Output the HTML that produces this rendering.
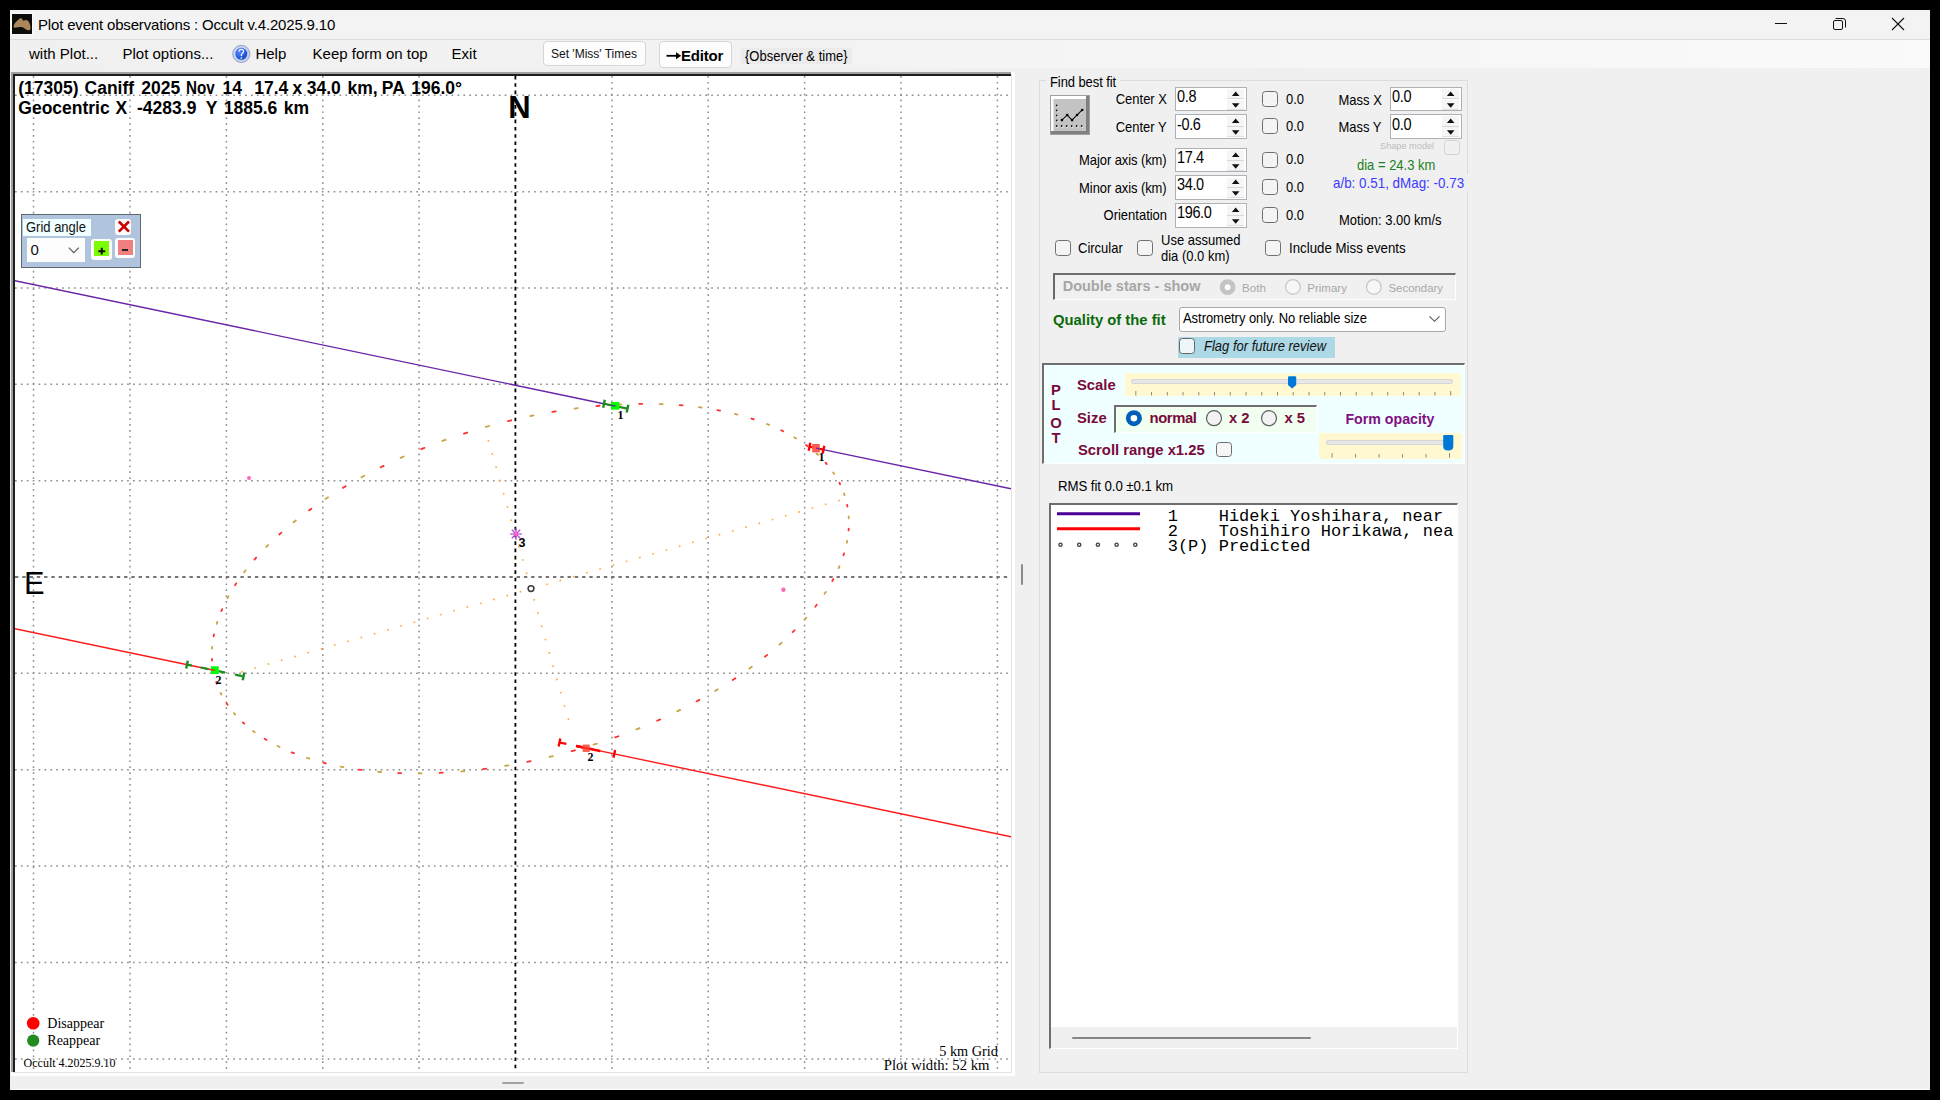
<!DOCTYPE html>
<html><head><meta charset="utf-8"><title>Plot event observations</title>
<style>
html,body{margin:0;padding:0;background:#000;font-family:'Liberation Sans',sans-serif;width:1940px;height:1100px;overflow:hidden;position:relative}
.t{position:absolute;white-space:pre;line-height:0}
svg{display:block}
</style></head><body>
<div style="position:absolute;left:10px;top:10px;width:1920px;height:1080px;background:#f0f0f0"></div>
<div style="position:absolute;left:10px;top:10px;width:1920px;height:29px;background:#f3f3f3"></div>
<div style="position:absolute;left:10px;top:39px;width:1920px;height:1px;background:#dcdcdc"></div>
<div style="position:absolute;left:10px;top:40px;width:1920px;height:28px;background:linear-gradient(90deg,#f0f0f0 0%,#f3f3f3 45%,#fafafa 100%)"></div>
<div style="position:absolute;left:10px;top:1089px;width:1920px;height:1px;background:#fbfbfb"></div>
<svg style="position:absolute;left:11px;top:13px" width="22" height="22" viewBox="-1 -1 22 22">
<rect x="-1" y="-1" width="22" height="22" fill="#fafafa"/>
<rect x="0" y="0" width="20" height="20" fill="#0d0c09"/>
<path d="M1.6 12.6 C1.8 10.6 2.6 9.2 4.4 7.4 C6 6 7.4 5 8.5 4.1 C9.4 4.1 10 4.8 10.6 5.9 C11.2 6.8 12 6.8 13 6.3 C14.4 5.7 16 6.6 17.2 8.4 C18.2 10.2 18.6 12.6 18.5 14.6 C18.3 16 17.6 16.5 16.2 16.3 C14.8 16.2 13.2 15.2 12 14 C10.9 13.2 9.6 13 8.4 13.1 C6.6 13.2 4.6 13.6 3 13.8 C2 13.8 1.5 13.4 1.6 12.6 Z" fill="#ad875c"/>
</svg>
<div class="t" style="left:38.00px;top:25.30px;font-size:15.00px;color:#000;font-family:'Liberation Sans', sans-serif;font-weight:normal;font-style:normal;letter-spacing:-0.17px">Plot event observations : Occult v.4.2025.9.10</div>
<svg style="position:absolute;left:1760px;top:10px" width="170" height="29" viewBox="1760 10 170 29">
<line x1="1775" y1="23.5" x2="1787" y2="23.5" stroke="#111" stroke-width="1"/>
<rect x="1833.5" y="20.5" width="9" height="9" rx="1.5" fill="none" stroke="#111" stroke-width="1"/>
<path d="M1835.5 18.5 H1843 Q1845.5 18.5 1845.5 21 V27.5" fill="none" stroke="#111" stroke-width="1"/>
<line x1="1892" y1="18" x2="1904" y2="30" stroke="#111" stroke-width="1.1"/>
<line x1="1904" y1="18" x2="1892" y2="30" stroke="#111" stroke-width="1.1"/>
</svg>
<div class="t" style="left:29.00px;top:53.80px;font-size:15.00px;color:#000;font-family:'Liberation Sans', sans-serif;font-weight:normal;font-style:normal;">with Plot...</div>
<div class="t" style="left:122.50px;top:53.80px;font-size:15.00px;color:#000;font-family:'Liberation Sans', sans-serif;font-weight:normal;font-style:normal;">Plot options...</div>
<svg style="position:absolute;left:231px;top:44px" width="20" height="20" viewBox="231 44 20 20">
<defs><radialGradient id="hg" cx="0.35" cy="0.35" r="0.75"><stop offset="0" stop-color="#4f86ff"/><stop offset="0.55" stop-color="#2a5fe0"/><stop offset="1" stop-color="#1240b0"/></radialGradient></defs>
<circle cx="241.3" cy="53.9" r="8.6" fill="#c6d2ec" stroke="#8a9cc8" stroke-width="0.9"/>
<circle cx="241.3" cy="53.9" r="6.3" fill="url(#hg)" stroke="#dfe8fb" stroke-width="0.6"/>
<path d="M238.9 51.6 Q239.1 49.3 241.4 49.3 Q243.6 49.3 243.6 51.3 Q243.6 52.7 242.2 53.6 Q241.3 54.3 241.3 55.9" fill="none" stroke="#f2f6ff" stroke-width="1.3"/>
<circle cx="241.3" cy="58" r="0.85" fill="#f2f6ff"/>
</svg>
<div class="t" style="left:255.40px;top:53.80px;font-size:15.00px;color:#000;font-family:'Liberation Sans', sans-serif;font-weight:normal;font-style:normal;">Help</div>
<div class="t" style="left:312.60px;top:53.80px;font-size:15.00px;color:#000;font-family:'Liberation Sans', sans-serif;font-weight:normal;font-style:normal;">Keep form on top</div>
<div class="t" style="left:451.60px;top:53.80px;font-size:15.00px;color:#000;font-family:'Liberation Sans', sans-serif;font-weight:normal;font-style:normal;">Exit</div>
<div style="position:absolute;left:543px;top:41px;width:103px;height:25px;background:#fdfdfd;border:1px solid #d5d5d5;border-radius:4px;box-sizing:border-box"></div>
<div class="t" style="left:551.00px;top:53.64px;font-size:12.00px;color:#111;font-family:'Liberation Sans', sans-serif;font-weight:normal;font-style:normal;">Set 'Miss' Times</div>
<div style="position:absolute;left:659px;top:41px;width:73px;height:27px;background:#fdfdfd;border:1px solid #d5d5d5;border-radius:4px;box-sizing:border-box"></div>
<svg style="position:absolute;left:664px;top:50px" width="20" height="12" viewBox="664 50 20 12"><path d="M666.5 55.8 H679" stroke="#000" stroke-width="1.8"/><path d="M676 52.3 L681.2 55.8 L676 59.3 Z" fill="#000"/></svg>
<div class="t" style="left:681.00px;top:55.80px;font-size:15.00px;color:#000;font-family:'Liberation Sans', sans-serif;font-weight:bold;font-style:normal;letter-spacing:-0.2px">Editor</div>
<div style="position:absolute;left:741px;top:48px;width:111px;height:16px;background:#ebebeb"></div>
<div class="t" style="left:745.00px;top:56.12px;font-size:14.95px;color:#000;font-family:'Liberation Sans', sans-serif;font-weight:normal;font-style:normal;transform:scaleX(0.8696);transform-origin:0 0;">{Observer &amp; time}</div>
<div style="position:absolute;left:11px;top:72px;width:1004px;height:1004px;background:#ffffff"></div>
<div style="position:absolute;left:11px;top:72px;width:1000px;height:2px;background:#a0a0a0"></div>
<div style="position:absolute;left:11px;top:72px;width:2px;height:1000px;background:#a0a0a0"></div>
<div style="position:absolute;left:13px;top:74px;width:998px;height:2px;background:#1e1e1e"></div>
<div style="position:absolute;left:13px;top:74px;width:2px;height:998px;background:#1e1e1e"></div>
<div style="position:absolute;left:1011px;top:74px;width:1px;height:999px;background:#e3e3e3"></div>
<div style="position:absolute;left:13px;top:1072px;width:999px;height:1px;background:#e3e3e3"></div>
<svg style="position:absolute;left:15px;top:76px" width="996" height="996" viewBox="15 76 996 996">
<line x1="33.5" y1="76" x2="33.5" y2="1072" stroke="#8e8e8e" stroke-width="1.5" stroke-dasharray="1.7 4.2"/>
<line x1="130" y1="76" x2="130" y2="1072" stroke="#8e8e8e" stroke-width="1.5" stroke-dasharray="1.7 4.2"/>
<line x1="226.4" y1="76" x2="226.4" y2="1072" stroke="#8e8e8e" stroke-width="1.5" stroke-dasharray="1.7 4.2"/>
<line x1="322.8" y1="76" x2="322.8" y2="1072" stroke="#8e8e8e" stroke-width="1.5" stroke-dasharray="1.7 4.2"/>
<line x1="419.1" y1="76" x2="419.1" y2="1072" stroke="#8e8e8e" stroke-width="1.5" stroke-dasharray="1.7 4.2"/>
<line x1="611.9" y1="76" x2="611.9" y2="1072" stroke="#8e8e8e" stroke-width="1.5" stroke-dasharray="1.7 4.2"/>
<line x1="708.2" y1="76" x2="708.2" y2="1072" stroke="#8e8e8e" stroke-width="1.5" stroke-dasharray="1.7 4.2"/>
<line x1="804.6" y1="76" x2="804.6" y2="1072" stroke="#8e8e8e" stroke-width="1.5" stroke-dasharray="1.7 4.2"/>
<line x1="901" y1="76" x2="901" y2="1072" stroke="#8e8e8e" stroke-width="1.5" stroke-dasharray="1.7 4.2"/>
<line x1="997.4" y1="76" x2="997.4" y2="1072" stroke="#8e8e8e" stroke-width="1.5" stroke-dasharray="1.7 4.2"/>
<line x1="15" y1="95.3" x2="1011" y2="95.3" stroke="#8e8e8e" stroke-width="1.5" stroke-dasharray="1.7 4.2"/>
<line x1="15" y1="191.8" x2="1011" y2="191.8" stroke="#8e8e8e" stroke-width="1.5" stroke-dasharray="1.7 4.2"/>
<line x1="15" y1="288.0" x2="1011" y2="288.0" stroke="#8e8e8e" stroke-width="1.5" stroke-dasharray="1.7 4.2"/>
<line x1="15" y1="384.3" x2="1011" y2="384.3" stroke="#8e8e8e" stroke-width="1.5" stroke-dasharray="1.7 4.2"/>
<line x1="15" y1="480.7" x2="1011" y2="480.7" stroke="#8e8e8e" stroke-width="1.5" stroke-dasharray="1.7 4.2"/>
<line x1="15" y1="673.3" x2="1011" y2="673.3" stroke="#8e8e8e" stroke-width="1.5" stroke-dasharray="1.7 4.2"/>
<line x1="15" y1="769.7" x2="1011" y2="769.7" stroke="#8e8e8e" stroke-width="1.5" stroke-dasharray="1.7 4.2"/>
<line x1="15" y1="866.0" x2="1011" y2="866.0" stroke="#8e8e8e" stroke-width="1.5" stroke-dasharray="1.7 4.2"/>
<line x1="15" y1="962.4" x2="1011" y2="962.4" stroke="#8e8e8e" stroke-width="1.5" stroke-dasharray="1.7 4.2"/>
<line x1="15" y1="1059.0" x2="1011" y2="1059.0" stroke="#8e8e8e" stroke-width="1.5" stroke-dasharray="1.7 4.2"/>
<line x1="515.4" y1="76" x2="515.4" y2="1072" stroke="#000" stroke-width="1.8" stroke-dasharray="3.6 3.67"/>
<line x1="15" y1="577" x2="1011" y2="577" stroke="#4a4a4a" stroke-width="1.7" stroke-dasharray="3.4 3.87"/>
<line x1="14" y1="280.5" x2="617" y2="406.49" stroke="#6a24a8" stroke-width="1.4"/>
<line x1="816" y1="448.08" x2="1011" y2="488.8" stroke="#6a24a8" stroke-width="1.4"/>
<line x1="14" y1="628.5" x2="215" y2="670.47" stroke="#ff1a1a" stroke-width="1.4"/>
<line x1="576" y1="745.92" x2="1011" y2="836.8" stroke="#ff1a1a" stroke-width="1.4"/>
<path d="M847.10 504.79L847.44 506.52M848.69 528.53L848.56 530.36M844.08 553.43L843.49 555.33M833.36 579.02L832.32 580.96M816.75 604.80L815.28 606.73M794.57 630.26L792.69 632.15M767.24 654.91L765.00 656.72M735.31 678.28L732.74 679.96M699.38 699.89L696.54 701.43M660.17 719.34L657.11 720.70M618.43 736.24L615.22 737.40M574.97 750.27L571.67 751.20M530.65 761.16L527.32 761.84M486.33 768.68L483.03 769.11M442.86 772.70L439.66 772.86M401.10 773.14L398.06 773.03M361.85 769.98L359.03 769.60M325.88 763.30L323.34 762.66M293.90 753.21L291.68 752.32M266.51 739.92L264.66 738.80M244.27 723.69L242.82 722.36M227.59 704.82L226.58 703.31M216.81 683.70L216.24 682.03M212.13 660.72L212.03 658.93M213.64 636.34L214.01 634.47M221.32 611.03L222.15 609.10M235.02 585.28L236.28 583.34M254.47 559.60L256.15 557.69M279.28 534.48L281.35 532.63M308.99 510.41L311.40 508.67M343.00 487.87L345.71 486.25M380.66 467.29L383.61 465.84M421.24 449.07L424.38 447.81M463.94 433.56L467.20 432.52M507.93 421.08L511.26 420.27M552.36 411.85L555.69 411.29M596.37 406.06L599.63 405.77M639.09 403.83L642.22 403.81M679.69 405.19L682.63 405.44M717.39 410.12L720.08 410.63M751.45 418.53L753.84 419.30M781.20 430.25L783.25 431.25M806.08 445.04L807.73 446.27M825.59 462.64L826.82 464.06M839.35 482.68L840.15 484.27" stroke="#ff3030" stroke-width="1.8" stroke-linecap="round" fill="none"/>
<path d="M848.67 516.48L848.77 518.27M847.16 540.86L846.79 542.73M839.48 566.17L838.65 568.10M825.78 591.92L824.52 593.86M806.33 617.60L804.65 619.51M781.52 642.72L779.45 644.57M751.81 666.79L749.40 668.53M717.80 689.33L715.09 690.95M680.14 709.91L677.19 711.36M639.56 728.13L636.42 729.39M596.86 743.64L593.60 744.68M552.87 756.12L549.54 756.93M508.44 765.35L505.11 765.91M464.43 771.14L461.17 771.43M421.71 773.37L418.58 773.39M381.11 772.01L378.17 771.76M343.41 767.08L340.72 766.57M309.35 758.67L306.96 757.90M279.60 746.95L277.55 745.95M254.72 732.16L253.07 730.93M235.21 714.56L233.98 713.14M221.45 694.52L220.65 692.93M213.70 672.41L213.36 670.68M212.11 648.67L212.24 646.84M216.72 623.77L217.31 621.87M227.44 598.18L228.48 596.24M244.05 572.40L245.52 570.47M266.23 546.94L268.11 545.05M293.56 522.29L295.80 520.48M325.49 498.92L328.06 497.24M361.42 477.31L364.26 475.77M400.63 457.86L403.69 456.50M442.37 440.96L445.58 439.80M485.83 426.93L489.13 426.00M530.15 416.04L533.48 415.36M574.47 408.52L577.77 408.09M617.94 404.50L621.14 404.34M659.70 404.06L662.74 404.17M698.95 407.22L701.77 407.60M734.92 413.90L737.46 414.54M766.90 423.99L769.12 424.88M794.29 437.28L796.14 438.40M816.53 453.51L817.98 454.84M833.21 472.38L834.22 473.89M843.99 493.50L844.56 495.17" stroke="#c9a447" stroke-width="1.8" stroke-linecap="round" fill="none"/>
<path d="M241.16 671.90L242.70 671.46M254.42 668.10L255.96 667.66M267.69 664.29L269.23 663.85M280.95 660.49L282.49 660.05M294.22 656.69L295.76 656.24M307.48 652.88L309.02 652.44M320.75 649.08L322.29 648.64M334.02 645.27L335.55 644.83M347.28 641.47L348.82 641.03M360.55 637.67L362.08 637.23M373.81 633.86L375.35 633.42M387.08 630.06L388.61 629.62M400.34 626.25L401.88 625.81M413.61 622.45L415.15 622.01M426.87 618.65L428.41 618.21M440.14 614.84L441.68 614.40M453.40 611.04L454.94 610.60M466.67 607.24L468.21 606.79M479.93 603.43L481.47 602.99M493.20 599.63L494.74 599.19M506.47 595.82L508.00 595.38M519.73 592.02L521.27 591.58M533.00 588.22L534.53 587.78M546.26 584.41L547.80 583.97M559.53 580.61L561.07 580.17M572.79 576.81L574.33 576.36M586.06 573.00L587.60 572.56M599.32 569.20L600.86 568.76M612.59 565.39L614.13 564.95M625.85 561.59L627.39 561.15M639.12 557.79L640.66 557.35M652.39 553.98L653.92 553.54M665.65 550.18L667.19 549.74M678.92 546.37L680.45 545.93M692.18 542.57L693.72 542.13M705.45 538.77L706.98 538.33M718.71 534.96L720.25 534.52M731.98 531.16L733.52 530.72M745.24 527.36L746.78 526.91M758.51 523.55L760.05 523.11M771.77 519.75L773.31 519.31M785.04 515.94L786.58 515.50M798.30 512.14L799.84 511.70M811.57 508.34L813.11 507.90M824.84 504.53L826.37 504.09M838.10 500.73L839.64 500.29M488.24 439.88L488.68 441.41M492.05 453.14L492.49 454.68M495.85 466.41L496.29 467.95M499.65 479.67L500.09 481.21M503.46 492.94L503.90 494.48M507.26 506.20L507.70 507.74M511.06 519.47L511.51 521.01M514.87 532.73L515.31 534.27M518.67 546.00L519.11 547.54M522.48 559.27L522.92 560.80M526.28 572.53L526.72 574.07M530.08 585.80L530.52 587.33M533.89 599.06L534.33 600.60M537.69 612.33L538.13 613.87M541.49 625.59L541.94 627.13M545.30 638.86L545.74 640.40M549.10 652.12L549.54 653.66M552.91 665.39L553.35 666.93M556.71 678.65L557.15 680.19M560.51 691.92L560.95 693.46M564.32 705.19L564.76 706.72M568.12 718.45L568.56 719.99" stroke="#ffa833" stroke-width="1.6" fill="none"/>
<circle cx="249" cy="478" r="2" fill="#ff69b4"/>
<circle cx="783.4" cy="589.7" r="2.2" fill="#ff69b4"/>
<g stroke="#b04fd0" stroke-width="1.3"><line x1="510" y1="534" x2="522" y2="534"/><line x1="516" y1="528" x2="516" y2="540"/><line x1="511.8" y1="529.8" x2="520.2" y2="538.2"/><line x1="520.2" y1="529.8" x2="511.8" y2="538.2"/></g>
<circle cx="516" cy="534" r="2" fill="#ff5fc8"/>
<circle cx="531" cy="588.6" r="2.9" fill="#fff" stroke="#3c3c3c" stroke-width="1.5"/>
<line x1="604" y1="403.77" x2="627.5" y2="408.68" stroke="#1f8a1f" stroke-width="2.2"/><line x1="604.82" y1="399.85" x2="603.18" y2="407.68" stroke="#1f8a1f" stroke-width="2.4"/><line x1="628.32" y1="404.76" x2="626.68" y2="412.60" stroke="#1f8a1f" stroke-width="2.4"/>
<rect x="611" y="402" width="8.3" height="7.7" fill="#00ff00"/>
<line x1="809.5" y1="446.72" x2="823.5" y2="449.64" stroke="#ff0000" stroke-width="2.2"/><line x1="810.32" y1="442.80" x2="808.68" y2="450.63" stroke="#ff0000" stroke-width="2.4"/><line x1="824.32" y1="445.73" x2="822.68" y2="453.56" stroke="#ff0000" stroke-width="2.4"/>
<rect x="812.2" y="444" width="7.6" height="8.4" fill="#ff5a4a"/>
<line x1="187" y1="664.62" x2="243.5" y2="676.42" stroke="#1f8a1f" stroke-width="2.2" stroke-dasharray="5 9 8 10 7 10 7.5"/><line x1="187.82" y1="660.70" x2="186.18" y2="668.53" stroke="#1f8a1f" stroke-width="2.4"/><line x1="244.32" y1="672.51" x2="242.68" y2="680.34" stroke="#1f8a1f" stroke-width="2.4"/>
<rect x="211" y="666.3" width="7.7" height="7.7" fill="#00ff00"/>
<line x1="559.5" y1="742.47" x2="614.3" y2="753.92" stroke="#ff0000" stroke-width="2.2" stroke-dasharray="7 10 14 1000"/><line x1="560.32" y1="738.55" x2="558.68" y2="746.38" stroke="#ff0000" stroke-width="2.4"/><line x1="615.12" y1="750.01" x2="613.48" y2="757.84" stroke="#ff0000" stroke-width="2.4"/>
<line x1="576" y1="745.9" x2="600.3" y2="750.9" stroke="#ff0000" stroke-width="2.6"/>
<rect x="582.7" y="744.6" width="7" height="7.3" fill="#ff5a4a"/>
<line x1="611" y1="405.23" x2="615.5" y2="406.17" stroke="#5a2090" stroke-width="1.3"/>
<line x1="816" y1="448.08" x2="820" y2="448.91" stroke="#6a24a8" stroke-width="1.3"/>
<line x1="211" y1="669.63" x2="215" y2="670.47" stroke="#ff1a1a" stroke-width="1.3"/>
<line x1="582.7" y1="747.32" x2="590" y2="748.84" stroke="#ff1a1a" stroke-width="1.3"/>
</svg>
<div class="t" style="left:18.30px;top:87.94px;font-size:17.50px;color:#000;font-family:'Liberation Sans', sans-serif;font-weight:bold;font-style:normal;">(17305)</div>
<div class="t" style="left:84.55px;top:87.94px;font-size:17.50px;color:#000;font-family:'Liberation Sans', sans-serif;font-weight:bold;font-style:normal;">Caniff</div>
<div class="t" style="left:141.30px;top:87.94px;font-size:17.50px;color:#000;font-family:'Liberation Sans', sans-serif;font-weight:bold;font-style:normal;">2025</div>
<div class="t" style="left:185.55px;top:87.94px;font-size:17.50px;color:#000;font-family:'Liberation Sans', sans-serif;font-weight:bold;font-style:normal;transform:scaleX(0.87);transform-origin:0 0">Nov</div>
<div class="t" style="left:222.55px;top:87.94px;font-size:17.50px;color:#000;font-family:'Liberation Sans', sans-serif;font-weight:bold;font-style:normal;">14</div>
<div class="t" style="left:254.30px;top:87.94px;font-size:17.50px;color:#000;font-family:'Liberation Sans', sans-serif;font-weight:bold;font-style:normal;">17.4</div>
<div class="t" style="left:292.55px;top:87.94px;font-size:17.50px;color:#000;font-family:'Liberation Sans', sans-serif;font-weight:bold;font-style:normal;">x</div>
<div class="t" style="left:306.80px;top:87.94px;font-size:17.50px;color:#000;font-family:'Liberation Sans', sans-serif;font-weight:bold;font-style:normal;">34.0</div>
<div class="t" style="left:347.55px;top:87.94px;font-size:17.50px;color:#000;font-family:'Liberation Sans', sans-serif;font-weight:bold;font-style:normal;">km,</div>
<div class="t" style="left:381.80px;top:87.94px;font-size:17.50px;color:#000;font-family:'Liberation Sans', sans-serif;font-weight:bold;font-style:normal;">PA</div>
<div class="t" style="left:411.30px;top:87.94px;font-size:17.50px;color:#000;font-family:'Liberation Sans', sans-serif;font-weight:bold;font-style:normal;">196.0&deg;</div>
<div class="t" style="left:18.30px;top:107.54px;font-size:17.50px;color:#000;font-family:'Liberation Sans', sans-serif;font-weight:bold;font-style:normal;">Geocentric</div>
<div class="t" style="left:115.55px;top:107.54px;font-size:17.50px;color:#000;font-family:'Liberation Sans', sans-serif;font-weight:bold;font-style:normal;">X</div>
<div class="t" style="left:137.05px;top:107.54px;font-size:17.50px;color:#000;font-family:'Liberation Sans', sans-serif;font-weight:bold;font-style:normal;">-4283.9</div>
<div class="t" style="left:205.80px;top:107.54px;font-size:17.50px;color:#000;font-family:'Liberation Sans', sans-serif;font-weight:bold;font-style:normal;">Y</div>
<div class="t" style="left:223.80px;top:107.54px;font-size:17.50px;color:#000;font-family:'Liberation Sans', sans-serif;font-weight:bold;font-style:normal;">1885.6</div>
<div class="t" style="left:283.80px;top:107.54px;font-size:17.50px;color:#000;font-family:'Liberation Sans', sans-serif;font-weight:bold;font-style:normal;">km</div>
<div class="t" style="left:508.30px;top:108.26px;font-size:31.00px;color:#000;font-family:'Liberation Sans', sans-serif;font-weight:bold;font-style:normal;">N</div>
<div class="t" style="left:24.10px;top:583.93px;font-size:30.80px;color:#000;font-family:'Liberation Sans', sans-serif;font-weight:normal;font-style:normal;">E</div>
<div class="t" style="left:617.50px;top:414.55px;font-size:12.00px;color:#000;font-family:'Liberation Serif', serif;font-weight:bold;font-style:normal;">1</div>
<div class="t" style="left:818.50px;top:457.25px;font-size:12.00px;color:#000;font-family:'Liberation Serif', serif;font-weight:bold;font-style:normal;">1</div>
<div class="t" style="left:215.50px;top:679.75px;font-size:12.00px;color:#000;font-family:'Liberation Serif', serif;font-weight:bold;font-style:normal;">2</div>
<div class="t" style="left:587.60px;top:757.25px;font-size:12.00px;color:#000;font-family:'Liberation Serif', serif;font-weight:bold;font-style:normal;">2</div>
<div class="t" style="left:518.50px;top:542.67px;font-size:12.50px;color:#000;font-family:'Liberation Sans', sans-serif;font-weight:bold;font-style:normal;">3</div>
<svg style="position:absolute;left:20px;top:1010px" width="30" height="40" viewBox="20 1010 30 40"><circle cx="33.2" cy="1023.2" r="6.3" fill="#ff0000"/><circle cx="33.2" cy="1040.6" r="6.1" fill="#228b22"/></svg>
<div class="t" style="left:47.30px;top:1023.57px;font-size:14.00px;color:#000;font-family:'Liberation Serif', serif;font-weight:normal;font-style:normal;">Disappear</div>
<div class="t" style="left:47.30px;top:1040.88px;font-size:14.00px;color:#000;font-family:'Liberation Serif', serif;font-weight:normal;font-style:normal;">Reappear</div>
<div class="t" style="left:23.60px;top:1063.45px;font-size:12.00px;color:#000;font-family:'Liberation Serif', serif;font-weight:normal;font-style:normal;">Occult 4.2025.9.10</div>
<div class="t" style="right:942.00px;top:1051.17px;font-size:14.30px;color:#000;font-family:'Liberation Serif', serif;font-weight:normal;font-style:normal;">5 km Grid</div>
<div class="t" style="right:950.50px;top:1065.04px;font-size:14.70px;color:#000;font-family:'Liberation Serif', serif;font-weight:normal;font-style:normal;">Plot width: 52 km</div>
<div style="position:absolute;left:21px;top:214px;width:120px;height:54px;background:#b0c4de;border:1.5px solid #606870;box-sizing:border-box"></div>
<div style="position:absolute;left:23px;top:219px;width:68px;height:16.5px;background:#f0ffff"></div>
<div class="t" style="left:25.90px;top:227.32px;font-size:14.95px;color:#111;font-family:'Liberation Sans', sans-serif;font-weight:normal;font-style:normal;transform:scaleX(0.8696);transform-origin:0 0;">Grid angle</div>
<div style="position:absolute;left:115px;top:219px;width:16px;height:15.5px;background:#fbfbfb;border-radius:3px"></div>
<svg style="position:absolute;left:115px;top:219px" width="16" height="16" viewBox="115 219 16 16"><path d="M118.8 221.5 L129 231.7 M129 221.5 L118.8 231.7" stroke="#cc0000" stroke-width="2.6"/></svg>
<div style="position:absolute;left:27px;top:237.5px;width:57.5px;height:24.5px;background:#fdfdfd"></div>
<div class="t" style="left:30.50px;top:250.10px;font-size:15.00px;color:#111;font-family:'Liberation Sans', sans-serif;font-weight:normal;font-style:normal;">0</div>
<svg style="position:absolute;left:66px;top:244px" width="16" height="12" viewBox="66 244 16 12"><path d="M68.8 247.6 L73.8 252.6 L78.8 247.6" stroke="#555" stroke-width="1.1" fill="none"/></svg>
<div style="position:absolute;left:91px;top:239px;width:20.5px;height:20.5px;background:#fcfcfc;border-radius:3px"></div>
<div style="position:absolute;left:94px;top:241.4px;width:15px;height:15.099999999999994px;background:#7cfc00"></div>
<svg style="position:absolute;left:94px;top:241px" width="15" height="16" viewBox="94 241 15 16"><path d="M98.3 251.2 H105.2 M101.75 247.8 V254.6" stroke="#111" stroke-width="2"/></svg>
<div style="position:absolute;left:115px;top:238px;width:19.5px;height:19.5px;background:#fcfcfc;border-radius:3px"></div>
<div style="position:absolute;left:117.5px;top:240px;width:15.099999999999994px;height:15px;background:#f08080"></div>
<div style="position:absolute;left:122.3px;top:249px;width:5.400000000000006px;height:1.8000000000000114px;background:#222"></div>
<div style="position:absolute;left:502px;top:1082px;width:22px;height:2px;background:#a3a3a3;border-radius:1px"></div>
<div style="position:absolute;left:1021px;top:564px;width:2px;height:21px;background:#8a8a8a;border-radius:1px"></div>
<div style="position:absolute;left:1039px;top:80px;width:429px;height:993px;border:1px solid #dcdcdc;box-sizing:border-box"></div>
<div style="position:absolute;left:1046px;top:74px;width:74px;height:14px;background:#f0f0f0"></div>
<div class="t" style="left:1050.00px;top:81.52px;font-size:14.95px;color:#000;font-family:'Liberation Sans', sans-serif;font-weight:normal;font-style:normal;transform:scaleX(0.8696);transform-origin:0 0;letter-spacing:-0.1px">Find best fit</div>
<svg style="position:absolute;left:1050px;top:95px" width="40" height="40" viewBox="1050 95 40 40">
<rect x="1050" y="95" width="40" height="40" fill="#a0a0a0"/>
<rect x="1051" y="96" width="38" height="38" fill="#808080"/>
<rect x="1051" y="96" width="35" height="35" fill="#ffffff"/>
<rect x="1053.5" y="99" width="32.5" height="32" fill="#c3c3c3"/>
<g fill="#fff">
<circle cx="1057.4" cy="106.2" r="0.9"/><circle cx="1057.4" cy="111.2" r="0.9"/><circle cx="1057.4" cy="116.2" r="0.9"/><circle cx="1057.4" cy="121.2" r="0.9"/>
<circle cx="1057.4" cy="126.7" r="0.9"/><circle cx="1062.4" cy="126.7" r="0.9"/><circle cx="1067.4" cy="126.7" r="0.9"/><circle cx="1072.4" cy="126.7" r="0.9"/><circle cx="1077.4" cy="126.7" r="0.9"/><circle cx="1082.4" cy="126.7" r="0.9"/>
</g>
<g fill="#111">
<circle cx="1056.7" cy="105.5" r="0.9"/><circle cx="1056.7" cy="110.5" r="0.9"/><circle cx="1056.7" cy="115.5" r="0.9"/><circle cx="1056.7" cy="120.5" r="0.9"/>
<circle cx="1056.7" cy="126" r="0.9"/><circle cx="1061.7" cy="126" r="0.9"/><circle cx="1066.7" cy="126" r="0.9"/><circle cx="1071.7" cy="126" r="0.9"/><circle cx="1076.7" cy="126" r="0.9"/><circle cx="1081.7" cy="126" r="0.9"/>
</g>
<polyline points="1062.6,120.8 1067.8,115.7 1072.7,120.8 1077.7,115.7 1082.8,110.7" fill="none" stroke="#fff" stroke-width="1"/>
<polyline points="1062,120.1 1067.2,115 1072.1,120.1 1077.1,115 1082.2,110" fill="none" stroke="#111" stroke-width="1.1"/>
<g fill="#000"><circle cx="1062" cy="120.1" r="1.35"/><circle cx="1067.2" cy="115" r="1.35"/><circle cx="1072.1" cy="120.1" r="1.35"/><circle cx="1077.1" cy="115" r="1.35"/><circle cx="1082.2" cy="110" r="1.35"/></g>
</svg>
<div class="t" style="right:773.00px;top:99.32px;font-size:14.95px;color:#000;font-family:'Liberation Sans', sans-serif;font-weight:normal;font-style:normal;transform:scaleX(0.8696);transform-origin:100% 0;">Center X</div>
<div class="t" style="right:773.00px;top:126.82px;font-size:14.95px;color:#000;font-family:'Liberation Sans', sans-serif;font-weight:normal;font-style:normal;transform:scaleX(0.8696);transform-origin:100% 0;">Center Y</div>
<div class="t" style="right:773.00px;top:160.42px;font-size:14.95px;color:#000;font-family:'Liberation Sans', sans-serif;font-weight:normal;font-style:normal;transform:scaleX(0.8696);transform-origin:100% 0;letter-spacing:-0.1px">Major axis (km)</div>
<div class="t" style="right:773.00px;top:187.82px;font-size:14.95px;color:#000;font-family:'Liberation Sans', sans-serif;font-weight:normal;font-style:normal;transform:scaleX(0.8696);transform-origin:100% 0;letter-spacing:-0.1px">Minor axis (km)</div>
<div class="t" style="right:773.00px;top:215.12px;font-size:14.95px;color:#000;font-family:'Liberation Sans', sans-serif;font-weight:normal;font-style:normal;transform:scaleX(0.8696);transform-origin:100% 0;">Orientation</div>
<div style="position:absolute;left:1175px;top:86.6px;width:72px;height:24.400000000000006px;background:#fff;border:1px solid #b0b0b8;box-sizing:border-box"></div>
<div style="position:absolute;left:1227.2px;top:88.8px;width:16.799999999999955px;height:9.599999999999994px;background:#f6f6f6;border-bottom:1px solid #d8d8d8"></div>
<div style="position:absolute;left:1227.2px;top:99.6px;width:16.799999999999955px;height:9.0px;background:#f6f6f6;border-bottom:1px solid #e0e0e0"></div>
<svg style="position:absolute;left:1227px;top:86.6px" width="18" height="24" viewBox="0 0 18 24"><path d="M4.9 8.9 L12.5 8.9 L8.7 4.4 Z M4.9 16.2 L12.5 16.2 L8.7 20.7 Z" fill="#111"/></svg>
<div class="t" style="left:1177.10px;top:97.22px;font-size:16.67px;color:#000;font-family:'Liberation Sans', sans-serif;font-weight:normal;font-style:normal;transform:scaleX(0.8696);transform-origin:0 0;letter-spacing:-0.4px">0.8</div>
<div style="position:absolute;left:1175px;top:114.2px;width:72px;height:24.39999999999999px;background:#fff;border:1px solid #b0b0b8;box-sizing:border-box"></div>
<div style="position:absolute;left:1227.2px;top:116.4px;width:16.799999999999955px;height:9.599999999999994px;background:#f6f6f6;border-bottom:1px solid #d8d8d8"></div>
<div style="position:absolute;left:1227.2px;top:127.2px;width:16.799999999999955px;height:8.999999999999986px;background:#f6f6f6;border-bottom:1px solid #e0e0e0"></div>
<svg style="position:absolute;left:1227px;top:114.2px" width="18" height="24" viewBox="0 0 18 24"><path d="M4.9 8.9 L12.5 8.9 L8.7 4.4 Z M4.9 16.2 L12.5 16.2 L8.7 20.7 Z" fill="#111"/></svg>
<div class="t" style="left:1177.10px;top:124.52px;font-size:16.67px;color:#000;font-family:'Liberation Sans', sans-serif;font-weight:normal;font-style:normal;transform:scaleX(0.8696);transform-origin:0 0;letter-spacing:-0.4px">-0.6</div>
<div style="position:absolute;left:1175px;top:147.8px;width:72px;height:24.400000000000006px;background:#fff;border:1px solid #b0b0b8;box-sizing:border-box"></div>
<div style="position:absolute;left:1227.2px;top:150.0px;width:16.799999999999955px;height:9.600000000000023px;background:#f6f6f6;border-bottom:1px solid #d8d8d8"></div>
<div style="position:absolute;left:1227.2px;top:160.8px;width:16.799999999999955px;height:9.0px;background:#f6f6f6;border-bottom:1px solid #e0e0e0"></div>
<svg style="position:absolute;left:1227px;top:147.8px" width="18" height="24" viewBox="0 0 18 24"><path d="M4.9 8.9 L12.5 8.9 L8.7 4.4 Z M4.9 16.2 L12.5 16.2 L8.7 20.7 Z" fill="#111"/></svg>
<div class="t" style="left:1177.10px;top:157.92px;font-size:16.67px;color:#000;font-family:'Liberation Sans', sans-serif;font-weight:normal;font-style:normal;transform:scaleX(0.8696);transform-origin:0 0;letter-spacing:-0.4px">17.4</div>
<div style="position:absolute;left:1175px;top:175.4px;width:72px;height:24.400000000000006px;background:#fff;border:1px solid #b0b0b8;box-sizing:border-box"></div>
<div style="position:absolute;left:1227.2px;top:177.6px;width:16.799999999999955px;height:9.600000000000023px;background:#f6f6f6;border-bottom:1px solid #d8d8d8"></div>
<div style="position:absolute;left:1227.2px;top:188.4px;width:16.799999999999955px;height:9.0px;background:#f6f6f6;border-bottom:1px solid #e0e0e0"></div>
<svg style="position:absolute;left:1227px;top:175.4px" width="18" height="24" viewBox="0 0 18 24"><path d="M4.9 8.9 L12.5 8.9 L8.7 4.4 Z M4.9 16.2 L12.5 16.2 L8.7 20.7 Z" fill="#111"/></svg>
<div class="t" style="left:1177.10px;top:185.22px;font-size:16.67px;color:#000;font-family:'Liberation Sans', sans-serif;font-weight:normal;font-style:normal;transform:scaleX(0.8696);transform-origin:0 0;letter-spacing:-0.4px">34.0</div>
<div style="position:absolute;left:1175px;top:203.2px;width:72px;height:24.400000000000006px;background:#fff;border:1px solid #b0b0b8;box-sizing:border-box"></div>
<div style="position:absolute;left:1227.2px;top:205.39999999999998px;width:16.799999999999955px;height:9.600000000000023px;background:#f6f6f6;border-bottom:1px solid #d8d8d8"></div>
<div style="position:absolute;left:1227.2px;top:216.2px;width:16.799999999999955px;height:9.0px;background:#f6f6f6;border-bottom:1px solid #e0e0e0"></div>
<svg style="position:absolute;left:1227px;top:203.2px" width="18" height="24" viewBox="0 0 18 24"><path d="M4.9 8.9 L12.5 8.9 L8.7 4.4 Z M4.9 16.2 L12.5 16.2 L8.7 20.7 Z" fill="#111"/></svg>
<div class="t" style="left:1177.10px;top:213.02px;font-size:16.67px;color:#000;font-family:'Liberation Sans', sans-serif;font-weight:normal;font-style:normal;transform:scaleX(0.8696);transform-origin:0 0;letter-spacing:-0.4px">196.0</div>
<div style="position:absolute;left:1262.2px;top:90.6px;width:16.0px;height:16.0px;background:#f4f4f4;border:1.3px solid #6e6e6e;border-radius:3.5px;box-sizing:border-box"></div>
<div class="t" style="left:1285.60px;top:98.82px;font-size:14.95px;color:#000;font-family:'Liberation Sans', sans-serif;font-weight:normal;font-style:normal;transform:scaleX(0.8696);transform-origin:0 0;">0.0</div>
<div style="position:absolute;left:1262.2px;top:117.6px;width:16.0px;height:16.0px;background:#f4f4f4;border:1.3px solid #6e6e6e;border-radius:3.5px;box-sizing:border-box"></div>
<div class="t" style="left:1285.60px;top:125.82px;font-size:14.95px;color:#000;font-family:'Liberation Sans', sans-serif;font-weight:normal;font-style:normal;transform:scaleX(0.8696);transform-origin:0 0;">0.0</div>
<div style="position:absolute;left:1262.2px;top:151.6px;width:16.0px;height:16.0px;background:#f4f4f4;border:1.3px solid #6e6e6e;border-radius:3.5px;box-sizing:border-box"></div>
<div class="t" style="left:1285.60px;top:159.42px;font-size:14.95px;color:#000;font-family:'Liberation Sans', sans-serif;font-weight:normal;font-style:normal;transform:scaleX(0.8696);transform-origin:0 0;">0.0</div>
<div style="position:absolute;left:1262.2px;top:178.7px;width:16.0px;height:16.0px;background:#f4f4f4;border:1.3px solid #6e6e6e;border-radius:3.5px;box-sizing:border-box"></div>
<div class="t" style="left:1285.60px;top:186.82px;font-size:14.95px;color:#000;font-family:'Liberation Sans', sans-serif;font-weight:normal;font-style:normal;transform:scaleX(0.8696);transform-origin:0 0;">0.0</div>
<div style="position:absolute;left:1262.2px;top:206.5px;width:16.0px;height:16.0px;background:#f4f4f4;border:1.3px solid #6e6e6e;border-radius:3.5px;box-sizing:border-box"></div>
<div class="t" style="left:1285.60px;top:214.82px;font-size:14.95px;color:#000;font-family:'Liberation Sans', sans-serif;font-weight:normal;font-style:normal;transform:scaleX(0.8696);transform-origin:0 0;">0.0</div>
<div class="t" style="right:558.00px;top:99.62px;font-size:14.95px;color:#000;font-family:'Liberation Sans', sans-serif;font-weight:normal;font-style:normal;transform:scaleX(0.8696);transform-origin:100% 0;">Mass X</div>
<div class="t" style="right:558.00px;top:126.62px;font-size:14.95px;color:#000;font-family:'Liberation Sans', sans-serif;font-weight:normal;font-style:normal;transform:scaleX(0.8696);transform-origin:100% 0;">Mass Y</div>
<div style="position:absolute;left:1390px;top:86.6px;width:72px;height:24.400000000000006px;background:#fff;border:1px solid #b0b0b8;box-sizing:border-box"></div>
<div style="position:absolute;left:1442.2px;top:88.8px;width:16.799999999999955px;height:9.599999999999994px;background:#f6f6f6;border-bottom:1px solid #d8d8d8"></div>
<div style="position:absolute;left:1442.2px;top:99.6px;width:16.799999999999955px;height:9.0px;background:#f6f6f6;border-bottom:1px solid #e0e0e0"></div>
<svg style="position:absolute;left:1442px;top:86.6px" width="18" height="24" viewBox="0 0 18 24"><path d="M4.9 8.9 L12.5 8.9 L8.7 4.4 Z M4.9 16.2 L12.5 16.2 L8.7 20.7 Z" fill="#111"/></svg>
<div class="t" style="left:1392.10px;top:97.22px;font-size:16.67px;color:#000;font-family:'Liberation Sans', sans-serif;font-weight:normal;font-style:normal;transform:scaleX(0.8696);transform-origin:0 0;letter-spacing:-0.4px">0.0</div>
<div style="position:absolute;left:1390px;top:114.2px;width:72px;height:24.39999999999999px;background:#fff;border:1px solid #b0b0b8;box-sizing:border-box"></div>
<div style="position:absolute;left:1442.2px;top:116.4px;width:16.799999999999955px;height:9.599999999999994px;background:#f6f6f6;border-bottom:1px solid #d8d8d8"></div>
<div style="position:absolute;left:1442.2px;top:127.2px;width:16.799999999999955px;height:8.999999999999986px;background:#f6f6f6;border-bottom:1px solid #e0e0e0"></div>
<svg style="position:absolute;left:1442px;top:114.2px" width="18" height="24" viewBox="0 0 18 24"><path d="M4.9 8.9 L12.5 8.9 L8.7 4.4 Z M4.9 16.2 L12.5 16.2 L8.7 20.7 Z" fill="#111"/></svg>
<div class="t" style="left:1392.10px;top:124.52px;font-size:16.67px;color:#000;font-family:'Liberation Sans', sans-serif;font-weight:normal;font-style:normal;transform:scaleX(0.8696);transform-origin:0 0;letter-spacing:-0.4px">0.0</div>
<div class="t" style="left:1380.00px;top:145.61px;font-size:9.20px;color:#bcbcbc;font-family:'Liberation Sans', sans-serif;font-weight:normal;font-style:normal;">Shape model</div>
<div style="position:absolute;left:1444px;top:139.5px;width:15.5px;height:15.5px;background:#f0f0f0;border:1.3px solid #d2d2d2;border-radius:3.5px;box-sizing:border-box"></div>
<div class="t" style="left:1356.70px;top:165.32px;font-size:14.95px;color:#1d7f1d;font-family:'Liberation Sans', sans-serif;font-weight:normal;font-style:normal;transform:scaleX(0.8696);transform-origin:0 0;">dia = 24.3 km</div>
<div style="position:absolute;left:1330px;top:173.5px;width:140px;height:17.0px;background:#f0f0f0"></div>
<div class="t" style="left:1332.70px;top:182.66px;font-size:15.41px;color:#3b3bff;font-family:'Liberation Sans', sans-serif;font-weight:normal;font-style:normal;transform:scaleX(0.8696);transform-origin:0 0;">a/b: 0.51, dMag: -0.73</div>
<div class="t" style="left:1339.00px;top:220.12px;font-size:14.95px;color:#000;font-family:'Liberation Sans', sans-serif;font-weight:normal;font-style:normal;transform:scaleX(0.8696);transform-origin:0 0;">Motion: 3.00 km/s</div>
<div style="position:absolute;left:1055px;top:240.4px;width:16px;height:15.999999999999972px;background:#f4f4f4;border:1.3px solid #6e6e6e;border-radius:3.5px;box-sizing:border-box"></div>
<div class="t" style="left:1077.50px;top:247.82px;font-size:14.95px;color:#000;font-family:'Liberation Sans', sans-serif;font-weight:normal;font-style:normal;transform:scaleX(0.8696);transform-origin:0 0;">Circular</div>
<div style="position:absolute;left:1137.2px;top:240.4px;width:16.0px;height:15.999999999999972px;background:#f4f4f4;border:1.3px solid #6e6e6e;border-radius:3.5px;box-sizing:border-box"></div>
<div class="t" style="left:1161.00px;top:239.62px;font-size:14.95px;color:#000;font-family:'Liberation Sans', sans-serif;font-weight:normal;font-style:normal;transform:scaleX(0.8696);transform-origin:0 0;">Use assumed</div>
<div class="t" style="left:1161.00px;top:256.02px;font-size:14.95px;color:#000;font-family:'Liberation Sans', sans-serif;font-weight:normal;font-style:normal;transform:scaleX(0.8696);transform-origin:0 0;">dia (0.0 km)</div>
<div style="position:absolute;left:1265px;top:240.2px;width:16px;height:16.0px;background:#f4f4f4;border:1.3px solid #6e6e6e;border-radius:3.5px;box-sizing:border-box"></div>
<div class="t" style="left:1288.80px;top:248.20px;font-size:15.29px;color:#000;font-family:'Liberation Sans', sans-serif;font-weight:normal;font-style:normal;transform:scaleX(0.8696);transform-origin:0 0;">Include Miss events</div>
<div style="position:absolute;left:1053px;top:273.4px;width:403px;height:26.80000000000001px;border-top:2px solid #6e6e6e;border-left:2px solid #696969;border-bottom:1px solid #fff;border-right:1px solid #fff;box-sizing:border-box"></div>
<div class="t" style="left:1062.70px;top:286.48px;font-size:14.50px;color:#a6a6a6;font-family:'Liberation Sans', sans-serif;font-weight:bold;font-style:normal;">Double stars - show</div>
<svg style="position:absolute;left:1210px;top:276px" width="240" height="22" viewBox="1210 276 240 22">
<circle cx="1227.6" cy="287.2" r="5.4" fill="#fff" stroke="#c4c4c4" stroke-width="5"/>
<circle cx="1292.9" cy="286.9" r="7.3" fill="#f7f7f7" stroke="#c6c6c6" stroke-width="1.2"/>
<circle cx="1373.8" cy="286.9" r="7.3" fill="#f7f7f7" stroke="#c6c6c6" stroke-width="1.2"/>
</svg>
<div class="t" style="left:1242.00px;top:288.38px;font-size:11.60px;color:#a8a8a8;font-family:'Liberation Sans', sans-serif;font-weight:normal;font-style:normal;">Both</div>
<div class="t" style="left:1307.30px;top:288.42px;font-size:11.50px;color:#a8a8a8;font-family:'Liberation Sans', sans-serif;font-weight:normal;font-style:normal;">Primary</div>
<div class="t" style="left:1388.50px;top:288.45px;font-size:11.40px;color:#a8a8a8;font-family:'Liberation Sans', sans-serif;font-weight:normal;font-style:normal;">Secondary</div>
<div class="t" style="left:1053.00px;top:319.87px;font-size:14.80px;color:#0b6b0b;font-family:'Liberation Sans', sans-serif;font-weight:bold;font-style:normal;">Quality of the fit</div>
<div style="position:absolute;left:1179px;top:307px;width:267px;height:25px;background:#fff;border:1px solid #a8a8a8;border-radius:3px;box-sizing:border-box"></div>
<div class="t" style="left:1183.00px;top:318.22px;font-size:14.95px;color:#000;font-family:'Liberation Sans', sans-serif;font-weight:normal;font-style:normal;transform:scaleX(0.8696);transform-origin:0 0;letter-spacing:-0.05px">Astrometry only. No reliable size</div>
<svg style="position:absolute;left:1426px;top:312px" width="18" height="14" viewBox="1426 312 18 14"><path d="M1429.5 316.3 L1434.5 321.3 L1439.5 316.3" stroke="#555" stroke-width="1.1" fill="none"/></svg>
<div style="position:absolute;left:1178px;top:337px;width:157px;height:20.5px;background:#add8e6"></div>
<div style="position:absolute;left:1179.3px;top:338px;width:15.5px;height:15.5px;background:#eef6f9;border:1.3px solid #666;border-radius:3.5px;box-sizing:border-box"></div>
<div class="t" style="left:1203.50px;top:346.02px;font-size:14.95px;color:#111;font-family:'Liberation Sans', sans-serif;font-weight:normal;font-style:italic;transform:scaleX(0.8696);transform-origin:0 0;">Flag for future review</div>
<div style="position:absolute;left:1042px;top:362.5px;width:423px;height:101.5px;background:#f0ffff;border-top:2px solid #6e6e6e;border-left:2px solid #6e6e6e;border-bottom:1px solid #fff;border-right:1px solid #fff;box-sizing:border-box"></div>
<div class="t" style="left:1056.00px;top:389.57px;font-size:14.80px;color:#7a0a3c;font-family:'Liberation Sans', sans-serif;font-weight:bold;font-style:normal;transform:translateX(-50%) scaleX(1.0000);">P</div>
<div class="t" style="left:1056.00px;top:405.07px;font-size:14.80px;color:#7a0a3c;font-family:'Liberation Sans', sans-serif;font-weight:bold;font-style:normal;transform:translateX(-50%) scaleX(1.0000);">L</div>
<div class="t" style="left:1056.00px;top:423.07px;font-size:14.80px;color:#7a0a3c;font-family:'Liberation Sans', sans-serif;font-weight:bold;font-style:normal;transform:translateX(-50%) scaleX(1.0000);">O</div>
<div class="t" style="left:1056.00px;top:438.07px;font-size:14.80px;color:#7a0a3c;font-family:'Liberation Sans', sans-serif;font-weight:bold;font-style:normal;transform:translateX(-50%) scaleX(1.0000);">T</div>
<div class="t" style="left:1077.00px;top:384.87px;font-size:14.80px;color:#7a0a3c;font-family:'Liberation Sans', sans-serif;font-weight:bold;font-style:normal;">Scale</div>
<div class="t" style="left:1077.00px;top:417.87px;font-size:14.80px;color:#7a0a3c;font-family:'Liberation Sans', sans-serif;font-weight:bold;font-style:normal;">Size</div>
<div class="t" style="left:1078.00px;top:450.27px;font-size:14.80px;color:#7a0a3c;font-family:'Liberation Sans', sans-serif;font-weight:bold;font-style:normal;">Scroll range x1.25</div>
<div style="position:absolute;left:1124.6px;top:372.7px;width:336.4000000000001px;height:23.5px;background:#fff8d0"></div>
<div style="position:absolute;left:1130.8px;top:379.4px;width:322.5px;height:4.199999999999989px;background:#e7e7e7;border:1px solid #d6d6d6;border-radius:2px;box-sizing:border-box"></div>
<svg style="position:absolute;left:1124.6px;top:372.7px" width="336.4000000000001" height="23.5" viewBox="1124.6 372.7 336.4000000000001 23.5"><line x1="1135.40" y1="390.70" x2="1135.40" y2="395.20" stroke="#8c8c8c" stroke-width="1"/><line x1="1151.14" y1="391.70" x2="1151.14" y2="395.20" stroke="#8c8c8c" stroke-width="1"/><line x1="1166.89" y1="391.70" x2="1166.89" y2="395.20" stroke="#8c8c8c" stroke-width="1"/><line x1="1182.63" y1="391.70" x2="1182.63" y2="395.20" stroke="#8c8c8c" stroke-width="1"/><line x1="1198.38" y1="391.70" x2="1198.38" y2="395.20" stroke="#8c8c8c" stroke-width="1"/><line x1="1214.12" y1="391.70" x2="1214.12" y2="395.20" stroke="#8c8c8c" stroke-width="1"/><line x1="1229.87" y1="391.70" x2="1229.87" y2="395.20" stroke="#8c8c8c" stroke-width="1"/><line x1="1245.62" y1="391.70" x2="1245.62" y2="395.20" stroke="#8c8c8c" stroke-width="1"/><line x1="1261.36" y1="391.70" x2="1261.36" y2="395.20" stroke="#8c8c8c" stroke-width="1"/><line x1="1277.11" y1="391.70" x2="1277.11" y2="395.20" stroke="#8c8c8c" stroke-width="1"/><line x1="1292.85" y1="391.70" x2="1292.85" y2="395.20" stroke="#8c8c8c" stroke-width="1"/><line x1="1308.60" y1="391.70" x2="1308.60" y2="395.20" stroke="#8c8c8c" stroke-width="1"/><line x1="1324.34" y1="391.70" x2="1324.34" y2="395.20" stroke="#8c8c8c" stroke-width="1"/><line x1="1340.09" y1="391.70" x2="1340.09" y2="395.20" stroke="#8c8c8c" stroke-width="1"/><line x1="1355.83" y1="391.70" x2="1355.83" y2="395.20" stroke="#8c8c8c" stroke-width="1"/><line x1="1371.58" y1="391.70" x2="1371.58" y2="395.20" stroke="#8c8c8c" stroke-width="1"/><line x1="1387.32" y1="391.70" x2="1387.32" y2="395.20" stroke="#8c8c8c" stroke-width="1"/><line x1="1403.07" y1="391.70" x2="1403.07" y2="395.20" stroke="#8c8c8c" stroke-width="1"/><line x1="1418.81" y1="391.70" x2="1418.81" y2="395.20" stroke="#8c8c8c" stroke-width="1"/><line x1="1434.56" y1="391.70" x2="1434.56" y2="395.20" stroke="#8c8c8c" stroke-width="1"/><line x1="1450.30" y1="390.70" x2="1450.30" y2="395.20" stroke="#8c8c8c" stroke-width="1"/></svg>
<svg style="position:absolute;left:1286px;top:375px" width="12" height="16" viewBox="1286 375 12 16"><path d="M1288 377.5 Q1288 376.3 1289.2 376.3 H1295 Q1296.2 376.3 1296.2 377.5 V385 L1292.1 388.5 L1288 385 Z" fill="#0078d7"/></svg>
<div style="position:absolute;left:1114.4px;top:405px;width:202.5999999999999px;height:27.5px;background:#f0fff0;border-top:2px solid #6e6e6e;border-left:2px solid #6e6e6e;border-bottom:1px solid #fff;border-right:1px solid #fff;box-sizing:border-box"></div>
<svg style="position:absolute;left:1120px;top:405px" width="160" height="28" viewBox="1120 405 160 28">
<circle cx="1133.9" cy="418.2" r="8" fill="#005fb8"/>
<circle cx="1133.9" cy="418.2" r="3.3" fill="#fff"/>
<circle cx="1214" cy="418.2" r="7.5" fill="#f3f3f3" stroke="#5e5e5e" stroke-width="1.2"/>
<circle cx="1269" cy="418.2" r="7.5" fill="#f3f3f3" stroke="#5e5e5e" stroke-width="1.2"/>
</svg>
<div class="t" style="left:1149.50px;top:417.87px;font-size:14.80px;color:#7a0a3c;font-family:'Liberation Sans', sans-serif;font-weight:bold;font-style:normal;letter-spacing:-0.4px">normal</div>
<div class="t" style="left:1229.00px;top:417.87px;font-size:14.80px;color:#7a0a3c;font-family:'Liberation Sans', sans-serif;font-weight:bold;font-style:normal;">x 2</div>
<div class="t" style="left:1284.40px;top:417.87px;font-size:14.80px;color:#7a0a3c;font-family:'Liberation Sans', sans-serif;font-weight:bold;font-style:normal;">x 5</div>
<div class="t" style="left:1345.40px;top:418.88px;font-size:14.20px;color:#80107f;font-family:'Liberation Sans', sans-serif;font-weight:bold;font-style:normal;">Form opacity</div>
<div style="position:absolute;left:1318.5px;top:433.2px;width:143.5px;height:25.600000000000023px;background:#fff8d0"></div>
<div style="position:absolute;left:1325.9px;top:440.4px;width:124.59999999999991px;height:4.199999999999989px;background:#e7e7e7;border:1px solid #d6d6d6;border-radius:2px;box-sizing:border-box"></div>
<svg style="position:absolute;left:1318.5px;top:433.2px" width="143.5" height="25.600000000000023" viewBox="1318.5 433.2 143.5 25.600000000000023"><line x1="1331.60" y1="453.30" x2="1331.60" y2="457.80" stroke="#8c8c8c" stroke-width="1"/><line x1="1355.08" y1="454.30" x2="1355.08" y2="457.80" stroke="#8c8c8c" stroke-width="1"/><line x1="1378.56" y1="454.30" x2="1378.56" y2="457.80" stroke="#8c8c8c" stroke-width="1"/><line x1="1402.04" y1="454.30" x2="1402.04" y2="457.80" stroke="#8c8c8c" stroke-width="1"/><line x1="1425.52" y1="454.30" x2="1425.52" y2="457.80" stroke="#8c8c8c" stroke-width="1"/><line x1="1449.00" y1="453.30" x2="1449.00" y2="457.80" stroke="#8c8c8c" stroke-width="1"/></svg>
<svg style="position:absolute;left:1440px;top:433px" width="16" height="20" viewBox="1440 433 16 20"><path d="M1443.2 436.2 Q1443.2 435 1444.4 435 H1452.1 Q1453.3 435 1453.3 436.2 V446.5 Q1453.3 450.5 1448.25 450.5 Q1443.2 450.5 1443.2 446.5 Z" fill="#0078d7"/></svg>
<div style="position:absolute;left:1216.2px;top:441.6px;width:15.599999999999909px;height:15.600000000000023px;background:#f6f6f6;border:1.3px solid #6e6e6e;border-radius:3.5px;box-sizing:border-box"></div>
<div class="t" style="left:1058.20px;top:486.00px;font-size:15.29px;color:#000;font-family:'Liberation Sans', sans-serif;font-weight:normal;font-style:normal;transform:scaleX(0.8696);transform-origin:0 0;letter-spacing:-0.1px">RMS fit 0.0 &plusmn;0.1 km</div>
<div style="position:absolute;left:1049px;top:503px;width:409px;height:546px;background:#fff;border-top:2px solid #6e6e6e;border-left:2px solid #6e6e6e;border-bottom:1px solid #fff;border-right:1px solid #fff;box-sizing:border-box"></div>
<div style="position:absolute;left:1051px;top:1027px;width:406px;height:21px;background:#f0f0f0"></div>
<div style="position:absolute;left:1071.8px;top:1036.6px;width:238.9000000000001px;height:2.2000000000000455px;background:#858585;border-radius:1px"></div>
<svg style="position:absolute;left:1051px;top:505px" width="100" height="50" viewBox="1051 505 100 50">
<line x1="1057" y1="513.8" x2="1140" y2="513.8" stroke="#4b0096" stroke-width="3"/>
<line x1="1057" y1="528.8" x2="1140" y2="528.8" stroke="#ff0000" stroke-width="3"/>
<g fill="none" stroke="#444" stroke-width="1.4">
<circle cx="1060.5" cy="544.7" r="1.6"/><circle cx="1079.2" cy="544.7" r="1.6"/><circle cx="1097.9" cy="544.7" r="1.6"/><circle cx="1116.6" cy="544.7" r="1.6"/><circle cx="1135.3" cy="544.7" r="1.6"/>
</g></svg>
<div style="position:absolute;left:1051px;top:505px;width:404px;height:60px;overflow:hidden">
<div class="t" style="left:116.70px;top:11.77px;font-size:17.00px;color:#000;font-family:'Liberation Mono', monospace;font-weight:normal;font-style:normal;">1    Hideki Yoshihara, near</div>
<div class="t" style="left:116.70px;top:26.77px;font-size:17.00px;color:#000;font-family:'Liberation Mono', monospace;font-weight:normal;font-style:normal;">2    Toshihiro Horikawa, near E</div>
<div class="t" style="left:116.70px;top:41.77px;font-size:17.00px;color:#000;font-family:'Liberation Mono', monospace;font-weight:normal;font-style:normal;">3(P) Predicted</div>
</div>
</body></html>
